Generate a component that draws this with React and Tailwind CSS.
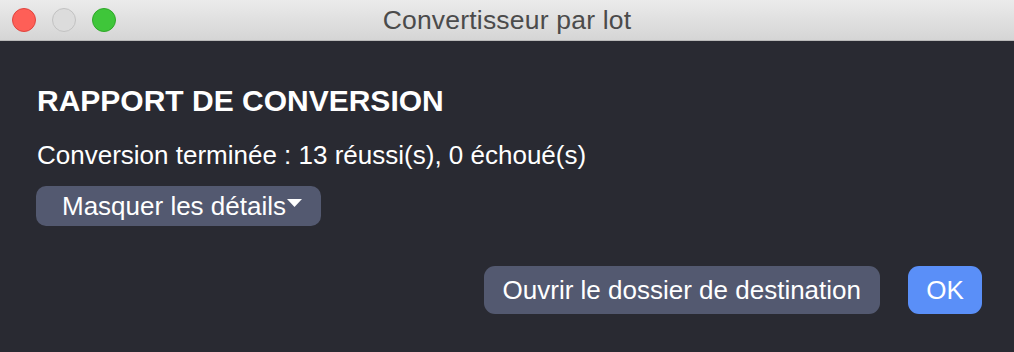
import React from "react";

const font = { fontFamily: '"Liberation Sans", Arial, sans-serif' };

const TrafficLights = () => (
  <div className="absolute left-[12px] top-[8px] flex gap-[16px]">
    <span className="w-[24px] h-[24px] rounded-full bg-[#fe5f57] border border-[#e0443e]" />
    <span className="w-[24px] h-[24px] rounded-full bg-[#dcdcdc] border border-[#c2c2c2]" />
    <span className="w-[24px] h-[24px] rounded-full bg-[#3fc63a] border border-[#2fa829]" />
  </div>
);

export default function App() {
  return (
    <div className="w-[1014px] h-[352px] flex flex-col bg-[#292a32] text-white" style={font}>
      {/* ===== TITLE BAR ===== */}
      <div className="relative h-[41px] shrink-0 bg-gradient-to-b from-[#ebebeb] to-[#d5d5d5] border-b border-[#b9b9b9] flex items-center justify-center">
        <TrafficLights />
        <span className="text-[26.5px] leading-[41px] text-[#4b4b4b] tracking-[0.2px]">
          Convertisseur par lot
        </span>
      </div>

      {/* ===== CONTENT ===== */}
      <div className="flex-1 flex flex-col px-[37px] pt-[42px] pb-[38px]">
        <h1 className="text-[30px] leading-[36px] font-bold">RAPPORT DE CONVERSION</h1>
        <p className="mt-[20px] text-[26px] leading-[32px]">
          Conversion terminée : 13 réussi(s), 0 échoué(s)
        </p>

        <div className="mt-[15px]">
          <button className="-ml-px h-[40px] flex items-center pl-[26px] pr-[19px] rounded-[10px] bg-[#535970] text-[26px] leading-[40px]">
            Masquer les détails
            <svg width="15" height="8" viewBox="0 0 15 8" className="ml-[1px] mb-[6px]">
              <path d="M0 0 H15 L7.5 8 Z" fill="#ffffff" />
            </svg>
          </button>
        </div>

        <div className="mt-auto flex justify-end gap-[28px] -mr-[5px]">
          <button className="h-[48px] px-[19px] rounded-[11px] bg-[#535970] text-[26px] leading-[48px]">
            Ouvrir le dossier de destination
          </button>
          <button className="h-[48px] w-[74px] rounded-[11px] bg-[#5a8ff8] text-[26px] leading-[48px]">
            OK
          </button>
        </div>
      </div>
    </div>
  );
}
